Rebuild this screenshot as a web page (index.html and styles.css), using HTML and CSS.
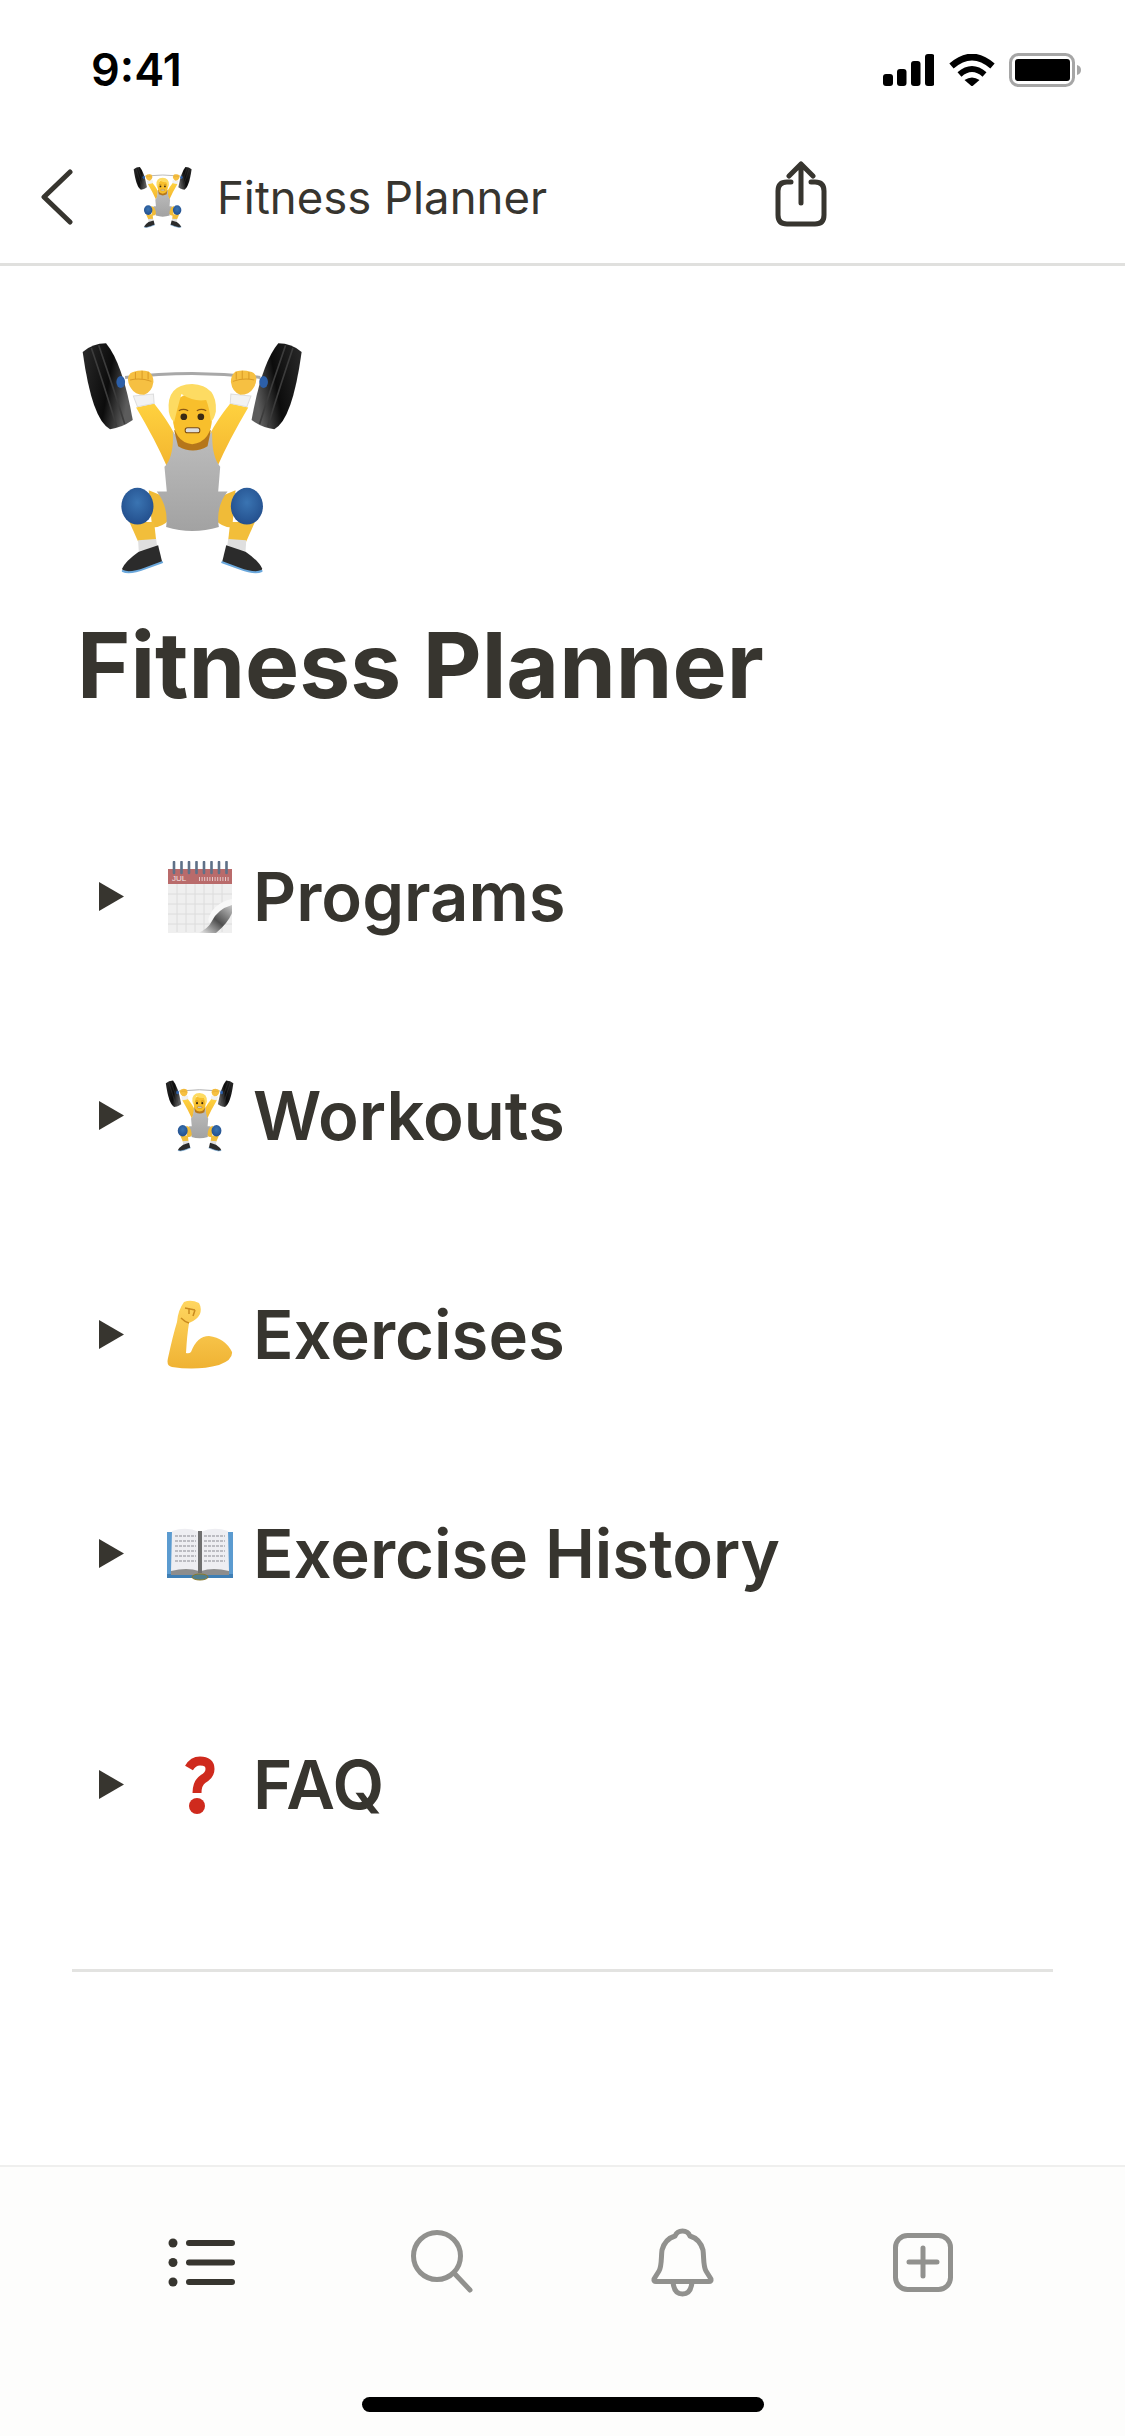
FILE: index.html
```html
<!DOCTYPE html>
<html lang="en">

<head>
    <meta charset="UTF-8" />
    <meta name="viewport" content="width=device-width, initial-scale=1" />
    <title>Fitness Planner</title>
    <link rel="stylesheet" href="styles.css">
</head>

<body>
    <!-- shared emoji drawings -->
    <svg class="sprites" aria-hidden="true">
        <defs>
            <linearGradient id="plateFill" x1="0" y1="0" x2="1" y2="0.3">
                <stop offset="0" stop-color="#2a2a2a" />
                <stop offset="0.6" stop-color="#0c0c0c" />
                <stop offset="1" stop-color="#5c5c5c" />
            </linearGradient>
            <linearGradient id="suitFill" x1="0" y1="0" x2="0" y2="1">
                <stop offset="0" stop-color="#bdbdbd" />
                <stop offset="1" stop-color="#a2a2a2" />
            </linearGradient>
            <linearGradient id="skinFill" x1="0" y1="0" x2="0" y2="1">
                <stop offset="0" stop-color="#ffd23f" />
                <stop offset="1" stop-color="#f3b52f" />
            </linearGradient>
            <radialGradient id="kneeFill" cx="0.5" cy="0.4" r="0.6">
                <stop offset="0" stop-color="#3a74b2" />
                <stop offset="1" stop-color="#234f8d" />
            </radialGradient>
            <linearGradient id="curlFill" x1="0" y1="1" x2="1" y2="0">
                <stop offset="0" stop-color="#f4f4f4" />
                <stop offset="0.5" stop-color="#4e4e4e" />
                <stop offset="1" stop-color="#c8c8c8" />
            </linearGradient>
            <linearGradient id="armFill" x1="0" y1="0" x2="0" y2="1">
                <stop offset="0" stop-color="#ffd660" />
                <stop offset="1" stop-color="#efb233" />
            </linearGradient>

            <g id="lifterSide">
                <path fill="url(#plateFill)" d="M98 96Q128 70 168 70Q218 130 248 300Q214 324 180 327Q126 300 98 96Z" />
                <path fill="none" stroke="#3c3c3c" stroke-width="5" d="M124 84Q160 190 200 320M146 76Q186 190 224 312" />
                <ellipse cx="212" cy="186" rx="13" ry="18" fill="#2c5fa8" />
                <path fill="url(#skinFill)" d="M258 262L312 250Q352 300 372 340Q376 400 350 438Q316 360 258 262Z" />
                <path fill="#f2f2f2" stroke="#dddddd" stroke-width="3" d="M250 228L310 222L312 250L262 260Z" />
                <path fill="#f6c042" d="M234 172Q238 156 254 154Q272 148 296 154Q310 164 310 186Q306 216 282 224Q254 224 244 206Q232 190 234 172Z" />
                <path fill="none" stroke="#d99a25" stroke-width="3" d="M256 156V176M276 152V176M294 156V178M240 180Q270 172 304 184" />
                <path fill="#f0bb38" d="M296 510L345 530Q366 565 358 596Q340 620 306 622Z" />
                <path fill="#f2be3a" d="M238 605L312 605L318 660L264 664Z" />
                <path fill="#dfdfdf" d="M264 660L318 656L322 684L266 692Z" />
                <path fill="#2b2b2b" d="M216 745Q226 722 266 694L324 675L336 724Q284 748 240 756Q218 756 216 745Z" />
                <path fill="none" stroke="#6ba8dc" stroke-width="6" stroke-linecap="round" d="M218 752Q238 762 286 744L336 726" />
                <ellipse cx="262" cy="558" rx="48" ry="55" fill="url(#kneeFill)" />
            </g>

            <symbol id="lifter" viewBox="90 60 680 710">
                <path fill="none" stroke="#a8a8a8" stroke-width="9" d="M225 172Q425 148 630 172" />
                <use href="#lifterSide" />
                <use href="#lifterSide" transform="translate(852 0) scale(-1 1)" />
                <path fill="url(#suitFill)" d="M368 335Q372 410 343 440L350 514L320 514Q356 560 348 620Q426 644 506 620Q496 560 532 514L504 514L510 440Q484 410 486 335L445 380H405Z" />
                <path fill="#b5761a" d="M372 330H482L472 378Q428 404 384 378Z" />
                <path fill="#f8bf2c" d="M368 290Q368 222 426 222Q486 222 486 290Q484 366 426 372Q370 366 368 290Z" />
                <path fill="#fddb62" d="M356 274Q348 194 426 192Q502 196 497 274Q492 298 482 304Q478 264 468 240Q430 246 394 222Q384 256 372 306Q360 296 356 274Z" />
                <circle cx="401" cy="290" r="10" fill="#3a2a14" />
                <circle cx="452" cy="290" r="10" fill="#3a2a14" />
                <path fill="none" stroke="#8d5a14" stroke-width="4" d="M386 272Q400 264 414 272M440 272Q454 264 468 272" />
                <rect x="405" y="323" width="44" height="15" rx="7" fill="#dddddd" stroke="#7a4a10" stroke-width="3" />
            </symbol>

            <symbol id="calendar" viewBox="0 0 64 72">
                <rect x="0" y="12" width="64" height="60" fill="#efefef" />
                <path fill="none" stroke="#dcdcdc" d="M9 23V71M18 23V71M27 23V71M36 23V71M45 23V71M54 23V71M0 33H64M0 43H64M0 53H64M0 63H64" />
                <rect x="0" y="8" width="64" height="15" fill="#b96b6b" />
                <text class="cal-month" x="4" y="20">JUL</text>
                <path fill="none" stroke="#e6c9c9" stroke-width="4" stroke-dasharray="1 1.6" d="M31 18H61" />
                <path fill="none" stroke="#5f7188" stroke-width="2.6" stroke-linecap="round"
                    d="M6 1V12M13.500 1V12M21 1V12M28.500 1V12M36 1V12M43.500 1V12M51 1V12M58.500 1V12" />
                <path fill="#f8f8f8" d="M64 38Q52 40 44 50Q38 60 42 62Q50 48 64 44Z" />
                <path fill="url(#curlFill)" d="M64 44Q50 48 44 60Q40 68 30 72H48Q60 62 64 52Z" />
            </symbol>

            <symbol id="muscle" viewBox="0 0 66 69">
                <path fill="url(#armFill)" d="M17 2Q24 -1 32 3Q35 8 33 14Q30 20 22 23Q20 35 19 53Q22 54 24 52Q30 36 42 36Q58 38 65 52Q66 60 52 65Q30 71 5 67Q-1 66 1 58Q6 35 10 22Q11 10 17 2Z" />
                <path fill="none" stroke="#c98a1f" stroke-width="1.500" d="M18 8L28 10M22 8L22 14M28 10L26 16M14 18Q18 22 22 23" />
            </symbol>

            <symbol id="book" viewBox="0 0 66 54">
                <rect x="0" y="5" width="66" height="45" fill="#5b9bd0" />
                <rect x="0" y="47" width="66" height="4" fill="#3f7fb5" />
                <path fill="#8d8d8d" d="M4 42H62V48H36Q33 50 30 48H4Z" />
                <path fill="#eeeef2" d="M5 4Q20 -1 32 5V44Q20 40 4 44Z" />
                <path fill="#eeeef2" d="M34 5Q46 -1 61 4L62 44Q46 40 34 44Z" />
                <path fill="none" stroke="#8a8a92" stroke-width="1.200" stroke-dasharray="3 1"
                    d="M8 9H29M8 14H29M8 19H29M8 24H29M8 29H29M8 34H29M37 9H58M37 14H58M37 19H58M37 24H58M37 29H58M37 34H58" />
                <rect x="31" y="4" width="4" height="42" fill="#6f6f6f" />
                <ellipse cx="33" cy="50" rx="8" ry="3" fill="#4f7f8f" stroke="#8a7a2a" />
            </symbol>

            <symbol id="question" viewBox="0 0 30 58">
                <path fill="none" stroke="#cf2a1d" stroke-width="9" d="M4 12Q8 5 15 5Q25 5 25 13Q25 19 18 23Q12 27 12 37" />
                <circle cx="12" cy="50" r="8" fill="#cf2a1d" />
            </symbol>

            <path id="caret" d="M0 0L25 14.500L0 29Z" />
        </defs>
    </svg>

    <div class="screen">
        <header class="status-bar">
            <span class="clock">9:41</span>
            <div class="status-icons">
                <svg class="signal" viewBox="0 0 51 32">
                    <rect x="0" y="20" width="10" height="12" rx="3" />
                    <rect x="14" y="15" width="9.500" height="17" rx="3" />
                    <rect x="28" y="7" width="9.500" height="25" rx="3" />
                    <rect x="42" y="0" width="9.500" height="32" rx="3" />
                </svg>
                <svg class="wifi" viewBox="0 0 46 32">
                    <path fill="none" stroke="#000" stroke-width="6.500" d="M2.500 12Q23 -6 43.500 12" />
                    <path fill="none" stroke="#000" stroke-width="6" d="M10.500 20.500Q23 9.500 35.500 20.500" />
                    <path d="M15.500 26Q23 21 30.500 26L23 32.500Z" />
                </svg>
                <svg class="battery" viewBox="0 0 73 34">
                    <rect x="1.500" y="1.500" width="63" height="31" rx="8" fill="none" stroke="#a6a6a6" stroke-width="3" />
                    <rect x="6" y="6" width="55" height="22" rx="3" />
                    <path fill="#a6a6a6" d="M68 12Q72 13 72 17Q72 21 68 22Z" />
                </svg>
            </div>
        </header>

        <nav class="top-nav">
            <svg class="back-icon" viewBox="0 0 32 56">
                <path d="M29 3L3 28L29 53" />
            </svg>
            <svg class="nav-emoji"><use href="#lifter" /></svg>
            <span class="nav-title">Fitness Planner</span>
            <svg class="share-icon" viewBox="0 0 54 66">
                <path d="M27 3V42M15 15L27 3L39 15M17 21H13Q4 21 4 30V54Q4 63 13 63H41Q50 63 50 54V30Q50 21 41 21H37" />
            </svg>
        </nav>

        <main class="page">
            <svg class="page-emoji"><use href="#lifter" /></svg>
            <h1>Fitness Planner</h1>

            <div class="toggle">
                <svg class="caret" viewBox="0 0 25 29"><use href="#caret" /></svg>
                <span class="toggle-emoji"><svg class="emoji-cal"><use href="#calendar" /></svg></span>
                <span class="toggle-label">Programs</span>
            </div>
            <div class="toggle">
                <svg class="caret" viewBox="0 0 25 29"><use href="#caret" /></svg>
                <span class="toggle-emoji"><svg class="emoji-lifter"><use href="#lifter" /></svg></span>
                <span class="toggle-label">Workouts</span>
            </div>
            <div class="toggle">
                <svg class="caret" viewBox="0 0 25 29"><use href="#caret" /></svg>
                <span class="toggle-emoji"><svg class="emoji-muscle"><use href="#muscle" /></svg></span>
                <span class="toggle-label">Exercises</span>
            </div>
            <div class="toggle">
                <svg class="caret" viewBox="0 0 25 29"><use href="#caret" /></svg>
                <span class="toggle-emoji"><svg class="emoji-book"><use href="#book" /></svg></span>
                <span class="toggle-label">Exercise History</span>
            </div>
            <div class="toggle toggle-last">
                <svg class="caret" viewBox="0 0 25 29"><use href="#caret" /></svg>
                <span class="toggle-emoji"><svg class="emoji-question"><use href="#question" /></svg></span>
                <span class="toggle-label">FAQ</span>
            </div>

            <hr class="page-rule" />
        </main>

        <footer class="tab-bar">
            <div class="tabs">
                <svg class="tab-icon tab-dark" viewBox="0 0 80 80">
                    <path d="M25 21H68M25 40.500H68M25 60H68" />
                    <circle class="dot" cx="9" cy="21" r="4.500" />
                    <circle class="dot" cx="9" cy="40.500" r="4.500" />
                    <circle class="dot" cx="9" cy="60" r="4.500" />
                </svg>
                <svg class="tab-icon" viewBox="0 0 80 80">
                    <circle cx="33" cy="34" r="23.500" />
                    <path d="M50 51L66 68" />
                </svg>
                <svg class="tab-icon" viewBox="0 0 80 80">
                    <path d="M38.500 9Q44 9 46 14Q56 17 59 28C60 35 59 44 62 49L67 57Q67.500 59.500 65 59.500H12Q9.500 59.500 10 57L15 49C18 44 17 35 18 28Q21 17 31 14Q33 9 38.500 9Z" />
                    <path d="M29 60Q30 72 38.500 72Q47 72 48 60" />
                </svg>
                <svg class="tab-icon" viewBox="0 0 80 80">
                    <rect x="11.500" y="13.500" width="55" height="54" rx="12" />
                    <path d="M39 26V54M25 40H53" />
                </svg>
            </div>
            <div class="home-indicator"></div>
        </footer>
    </div>
</body>

</html>
```

FILE: styles.css
```css
body {
    margin: 0;
    background-color: #fff;
    color: #37352f;
    font-family: Inter, "Liberation Sans", sans-serif;
}

.sprites {
    display: block;
    width: 0;
    height: 0;
}

.screen {
    display: flex;
    flex-direction: column;
    height: 2436px;
    overflow: hidden;
}

.status-bar {
    display: flex;
    align-items: center;
    justify-content: space-between;
    height: 139px;
    padding: 0 43px 0 91px;
    box-sizing: border-box;
    flex-shrink: 0;
}

.clock {
    font-size: 45px;
    font-weight: 600;
    color: #000;
}

.status-icons {
    display: flex;
    align-items: center;
}

.signal {
    width: 51px;
    height: 32px;
    margin-right: 15px;
}

.wifi {
    width: 46px;
    height: 32px;
    margin-right: 14px;
}

.battery {
    width: 73px;
    height: 34px;
}

.top-nav {
    display: flex;
    align-items: center;
    height: 127px;
    padding: 0 297px 8px 41px;
    box-sizing: border-box;
    border-bottom: 3px solid #e0e0de;
    flex-shrink: 0;
}

.back-icon {
    width: 32px;
    height: 56px;
    margin-right: 60px;
}

.back-icon path,
.share-icon path {
    fill: none;
    stroke: #37352f;
    stroke-width: 5;
    stroke-linecap: round;
    stroke-linejoin: round;
}

.nav-emoji {
    width: 60px;
    height: 63px;
    margin-right: 24px;
}

.nav-title {
    flex: 1;
    font-size: 45.5px;
    font-weight: 400;
}

.share-icon {
    width: 54px;
    height: 66px;
    margin-bottom: 6px;
}

.page {
    padding: 0 72px;
}

.page-emoji {
    display: block;
    width: 227px;
    height: 237px;
    margin: 74px 0 0 8px;
}

h1 {
    margin: 33px 0 67px 5px;
    font-size: 91px;
    font-weight: 700;
    line-height: 110px;
}

.toggle {
    display: flex;
    align-items: center;
    height: 219px;
}

.toggle-last {
    margin-top: 12px;
}

.caret {
    width: 25px;
    height: 29px;
    margin-left: 27px;
    fill: #37352f;
}

.toggle-emoji {
    display: flex;
    align-items: center;
    justify-content: center;
    width: 80px;
    margin: 0 13px 0 36px;
}

.toggle-label {
    font-size: 67px;
    font-weight: 600;
}

.emoji-cal {
    width: 64px;
    height: 72px;
}

.emoji-lifter {
    width: 70px;
    height: 74px;
}

.emoji-muscle {
    width: 66px;
    height: 69px;
}

.emoji-book {
    width: 66px;
    height: 54px;
}

.emoji-question {
    width: 30px;
    height: 58px;
}

.cal-month {
    font-family: "Liberation Sans", sans-serif;
    font-size: 8px;
    fill: #f3e3e3;
}

.page-rule {
    height: 3px;
    margin: 75px 0 0;
    border: none;
    background-color: #e3e3e1;
}

.tab-bar {
    margin-top: auto;
    height: 271px;
    box-sizing: border-box;
    padding-top: 55px;
    border-top: 2px solid #efefee;
    background-color: #fdfdfc;
}

.tabs {
    display: flex;
    padding: 0 81px 0 84px;
}

.tabs .tab-icon {
    flex: 1;
    height: 80px;
}

.tab-icon * {
    fill: none;
    stroke: #91918e;
    stroke-width: 5;
    stroke-linecap: round;
    stroke-linejoin: round;
}

.tab-dark * {
    stroke: #37352f;
    stroke-width: 6;
}

.tab-dark .dot {
    fill: #37352f;
    stroke: none;
}

.home-indicator {
    width: 402px;
    height: 15px;
    margin: 95px auto 0;
    border-radius: 8px;
    background-color: #000;
}
```
